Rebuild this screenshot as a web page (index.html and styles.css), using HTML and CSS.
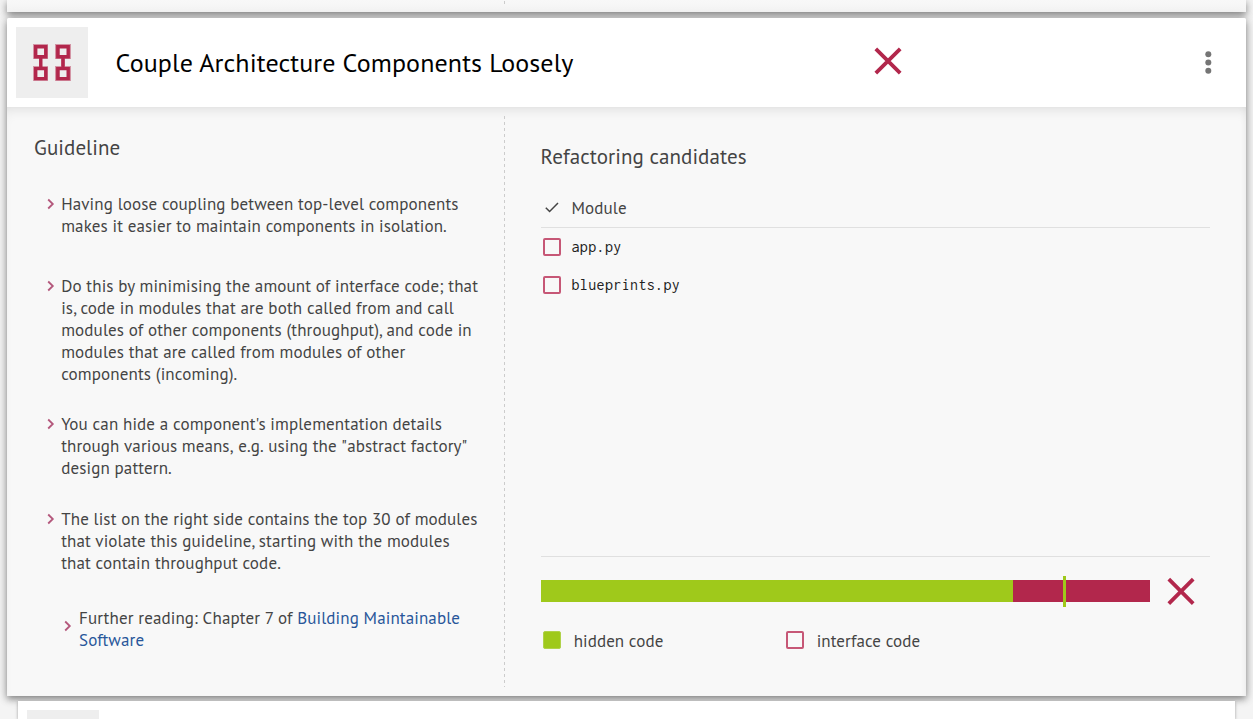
FILE: index.html
```html
<!DOCTYPE html>
<html lang="en">
<head>
<meta charset="utf-8">
<title>Guidelines</title>
<link rel="stylesheet" href="styles.css">
</head>
<body>
<div class="card card-prev"><div class="prev-rule"></div></div>

<section class="card card-main">
  <header class="head">
    <div class="tile">
      <svg width="38" height="38" viewBox="0 0 38 38">
        <path fill="#b2274c" fill-opacity=".45" fill-rule="evenodd" d="M0 0H15V15H0ZM4 4V11H11V4ZM0 22H15V37H0ZM4 26V33H11V26ZM22 0H38V15H22ZM27 4V11H34V4ZM22 22H38V37H22ZM27 26V33H34V26ZM6 15H9V22H6ZM28 15H32V22H28Z"/>
        <path fill="none" stroke="#b2274c" stroke-width="3.4" d="M2.7 2.7H12.8V12.8H2.7ZM2.7 24.6H12.8V34.6H2.7ZM24.8 2.7H35.2V12.8H24.8ZM24.8 24.6H35.2V34.6H24.8ZM7.8 13V24M30 13V24"/>
      </svg>
    </div>
    <h1>Couple Architecture Components Loosely</h1>
    <svg class="cross" width="28" height="28" viewBox="0 0 28 28"><path d="M1.8 1.8L26.2 26.2M26.2 1.8L1.8 26.2"/></svg>
    <svg class="dots" width="8" height="24" viewBox="0 0 8 24" fill="#757575"><circle cx="4.3" cy="4.2" r="3"/><circle cx="4.3" cy="12.4" r="3"/><circle cx="4.3" cy="20.7" r="3"/></svg>
  </header>

  <div class="body">
    <div class="guide">
      <h2>Guideline</h2>
      <ul>
        <li class="item first"><svg class="chev" viewBox="0 0 8 12"><path d="M1.2 1.5L5.8 6L1.2 10.5"/></svg>
          <p>Having loose coupling between top-level components makes it easier to maintain components in isolation.</p></li>
        <li class="item second"><svg class="chev" viewBox="0 0 8 12"><path d="M1.2 1.5L5.8 6L1.2 10.5"/></svg>
          <p>Do this by minimising the amount of interface code; that is, code in modules that are both called from and call modules of other components (throughput), and code in modules that are called from modules of other components (incoming).</p></li>
        <li class="item third"><svg class="chev" viewBox="0 0 8 12"><path d="M1.2 1.5L5.8 6L1.2 10.5"/></svg>
          <p>You can hide a component's implementation details <span class="plain">through various means, e.g. using the "abstract factory"</span> design pattern.</p></li>
        <li class="item fourth"><svg class="chev" viewBox="0 0 8 12"><path d="M1.2 1.5L5.8 6L1.2 10.5"/></svg>
          <p>The list on the right side contains the top 30 of modules that violate this guideline, starting with the modules that contain throughput code.</p></li>
        <li class="item reading"><svg class="chev" viewBox="0 0 8 12"><path d="M1.2 1.5L5.8 6L1.2 10.5"/></svg>
          <p>Further reading: Chapter 7 of <a>Building Maintainable</a> <a>Software</a></p></li>
      </ul>
    </div>
    <div class="rule"></div>
    <div class="candidates">
      <h2>Refactoring candidates</h2>
      <div class="thead">
        <svg width="14" height="12" viewBox="0 0 14 12" fill="none" stroke="#444" stroke-width="1.5"><path d="M.8 5.7L4.6 9.5L13 1"/></svg>
        <span class="module">Module</span>
      </div>
      <div class="rows">
        <div class="row"><i class="box"></i><code>app.py</code></div>
        <div class="row"><i class="box"></i><code>blueprints.py</code></div>
      </div>
      <div class="meter">
        <div class="bar"><div class="hidden-part"></div><div class="interface-part"></div><div class="mark"></div></div>
        <svg class="cross" width="28" height="28" viewBox="0 0 28 28"><path d="M1.8 2.2L26.2 26.6M26.2 2.2L1.8 26.6"/></svg>
      </div>
      <div class="legend">
        <div class="key"><i class="box full"></i><span>hidden code</span></div>
        <div class="key"><i class="box"></i><span>interface code</span></div>
      </div>
    </div>
  </div>
</section>

<section class="card card-next"><div class="tile tile-next"></div></section>
</body>
</html>
```

FILE: styles.css
```css
* { box-sizing: border-box; }
body {
  margin: 0;
  height: 719px;
  overflow: hidden;
  background: #f4f4f4;
  color: #444;
  font: 17px/22px "PT Sans", "Noto Sans", sans-serif;
  letter-spacing: .125px;
}
h1, h2, p, ul { margin: 0; padding: 0; font-weight: 400; }
ul { list-style: none; }

.card {
  position: relative;
  margin: 0 7px 0;
  box-shadow: 0 3px 7px rgba(0,0,0,.42), 0 1px 14px rgba(0,0,0,.12);
}
.card-prev {
  height: 12px;
  background: linear-gradient(#f8f8f8, #f4f4f4);
}
.prev-rule { width: 1px; height: 3px; margin-left: 497px; background: #ccc; transform: translateY(1px); }
.card-main {
  height: 678px;
  margin-top: 6px;
  border-radius: 2px 2px 0 0;
  background: #f8f8f8;
}
.card-next {
  height: 18px;
  margin: 5px 18px 0;
  padding: 9px 9px 0;
  background: #fff;
  box-shadow: 0 1px 3px rgba(0,0,0,.35);
}

.head {
  height: 89px;
  display: flex;
  align-items: flex-start;
  padding: 9px 0 0 9px;
  background: #fff;
  border-radius: 2px 2px 0 0;
}
.tile {
  flex: none;
  width: 72px;
  height: 71px;
  padding: 17px 0 0 17px;
  background: #eee;
}
.tile-next { height: 9px; padding: 0; }
.tile svg { display: block; }
h1 {
  width: 758.4px;
  margin: 18px 0 0 27.6px;
  color: #000;
  font-size: 26px;
  line-height: 36px;
  letter-spacing: .11px;
}
.cross { flex: none; stroke: #b2274c; stroke-width: 3.8; }
.head .cross { margin-top: 20px; }
.dots { margin: 23px 0 0 302px; }

.body {
  height: 589px;
  display: flex;
  box-shadow: inset 0 9px 14px -8px rgba(0,0,0,.13), inset -4px 0 10px -6px rgba(0,0,0,.07);
}
.guide { flex: none; width: 497px; padding: 27px 0 0 27px; }
h2 { font-size: 21px; line-height: 28px; letter-spacing: .07px; }
.item { display: flex; align-items: flex-start; padding-left: 13px; }
.item p { width: 422px; margin-left: 6.2px; }
.plain { font-kerning: none; letter-spacing: .1px; }
.chev {
  flex: none;
  width: 8px;
  height: 12px;
  margin-top: 5px;
  fill: none;
  stroke: #b4587c;
  stroke-width: 1.8;
}
.first { margin-top: 31px; }
.second { margin-top: 38px; }
.third { margin-top: 28px; }
.fourth { margin-top: 29px; }
.reading { margin-top: 33px; padding-left: 30px; }
.reading .chev { margin-top: 13px; }
.reading p { width: 400px; margin-left: 7px; }
a { color: #28569a; }

.rule {
  flex: none;
  width: 1px;
  height: 571px;
  margin-top: 9px;
  background: repeating-linear-gradient(#ccc 0 3px, transparent 3px 6px);
}
.candidates { width: 669px; margin-left: 36px; padding-top: 36px; }
.candidates h2 { margin-left: -.4px; }
.thead {
  height: 50px;
  margin-top: 7px;
  padding: 19px 0 0 4px;
  display: flex;
  align-items: flex-start;
}
.thead svg { margin-top: 5px; }
.module { margin-left: 12.5px; }
.rows { height: 330px; border: solid #e0e0e0; border-width: 1px 0; margin-top: -1px; }
.row { height: 38px; display: flex; align-items: center; padding-left: 2px; }
.box {
  flex: none;
  width: 18px;
  height: 18px;
  border: 2px solid #c65776;
  border-radius: 2px;
}
.full { background: #9fc91b; border: 1px solid #b0d24a; }
code {
  margin-left: 10.5px;
  color: #212121;
  font: 16px/20px Inconsolata, "DejaVu Sans Mono", monospace;
  letter-spacing: .36px;
}
.meter { height: 45px; padding-top: 20px; display: flex; align-items: flex-start; }
.bar { position: relative; width: 609px; height: 22px; margin-top: 3px; display: flex; }
.hidden-part { width: 472px; background: #9fc91b; }
.interface-part { width: 137px; background: #b2274c; }
.mark { position: absolute; left: 522px; top: -4px; width: 3px; height: 31px; background: #9fc91b; }
.meter .cross { margin-left: 17px; }
.legend { display: flex; margin-top: 28px; }
.key { width: 243px; display: flex; align-items: flex-start; padding-left: 2px; }
.key .box { margin-top: 1px; }
.key span { margin-left: 12.7px; white-space: nowrap; letter-spacing: .08px; }
```
